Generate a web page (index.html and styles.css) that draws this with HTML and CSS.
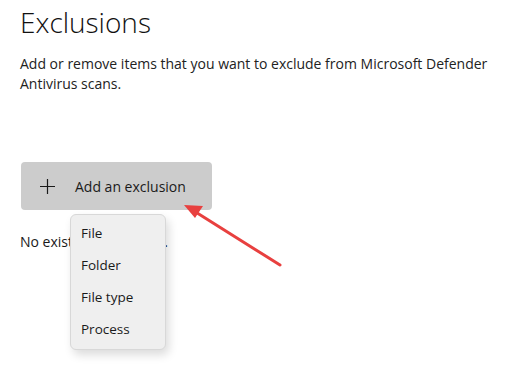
FILE: index.html
```html
<!DOCTYPE html>
<html lang="en">
<head>
  <meta charset="UTF-8">
  <title>Exclusions</title>
  <link rel="stylesheet" href="styles.css">
</head>
<body>

  <h1>Exclusions</h1>

  <p class="intro">Add or remove items that you want to exclude from Microsoft Defender Antivirus scans.</p>

  <div class="add-area">
    <button class="add-btn">
      <svg class="plus" width="15" height="15" viewBox="0 0 15 15">
        <path d="M7.5 0 V15 M0 7.5 H15" stroke="#1a1a1a" stroke-width="1.2" fill="none"/>
      </svg>
      <span>Add an exclusion</span>
    </button>

    <div class="menu">
      <div class="menu-item">File</div>
      <div class="menu-item">Folder</div>
      <div class="menu-item">File type</div>
      <div class="menu-item">Process</div>
    </div>
  </div>

  <p class="empty">No existing exclusions.</p>

  <!-- red annotation arrow -->
  <svg class="arrow" width="525" height="371" viewBox="0 0 525 371">
    <line x1="280" y1="265" x2="194" y2="211" stroke="#e8403f" stroke-width="3" stroke-linecap="round"/>
    <polygon points="184,205 203,206 195,218" fill="#e8403f"/>
  </svg>

</body>
</html>
```

FILE: styles.css
```css
body {
  margin: 0;
  padding: 0 20px;
  background: #ffffff;
  font-family: "Open Sans", "Noto Sans", sans-serif;
  color: #1a1a1a;
  width: 525px;
  height: 371px;
  box-sizing: border-box;
  overflow: hidden;
  position: relative;
}

h1 {
  font-weight: 300;
  font-size: 28px;
  line-height: 38px;
  margin: 0;
  padding-top: 3px;
  color: #111;
}

.intro {
  font-size: 14px;
  line-height: 20px;
  margin: 13px 0 0;
  color: #222;
  width: 485px;
}

.add-area {
  position: relative;
  margin-top: 68px;
}

.add-btn {
  display: flex;
  align-items: center;
  gap: 20px;
  width: 191px;
  height: 48px;
  margin-left: 1px;
  padding: 0 0 0 19px;
  border: none;
  border-radius: 4px;
  background: #cccccc;
  font-family: inherit;
  font-size: 14px;
  color: #1a1a1a;
}

.plus {
  flex: none;
}

.menu {
  position: absolute;
  left: 50px;
  top: 52px;
  width: 94px;
  padding: 2px 0 4px;
  background: #efefef;
  border: 1px solid #d8d8d8;
  border-radius: 6px;
  box-shadow: 3px 5px 10px rgba(0, 0, 0, 0.14);
  z-index: 2;
}

.menu-item {
  height: 32px;
  line-height: 32px;
  padding-left: 10px;
  font-size: 13.5px;
  color: #1a1a1a;
}

.empty {
  font-size: 14px;
  margin: 22px 0 0;
  color: #1a1a1a;
}

.arrow {
  position: absolute;
  left: 0;
  top: 0;
  z-index: 3;
  pointer-events: none;
}
```
